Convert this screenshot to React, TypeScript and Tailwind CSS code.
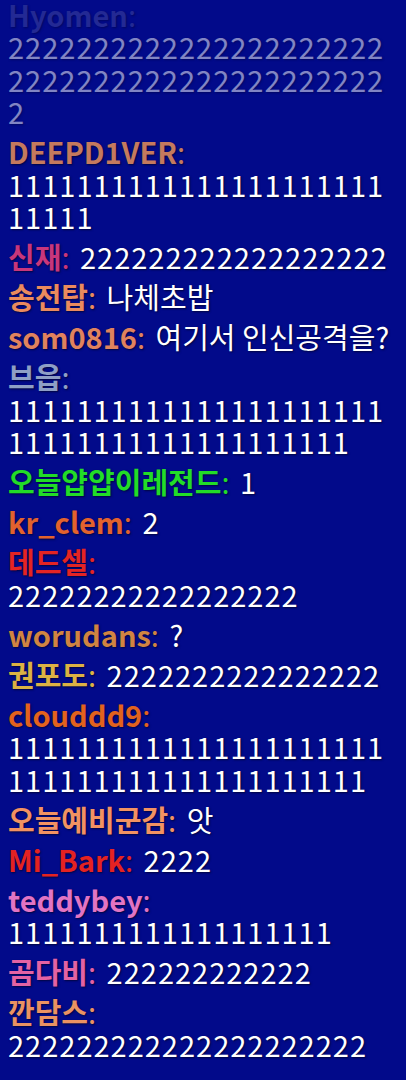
import React from 'react';

type ChatMessage = {
  name: string;
  color: string;
  text: string;
  faded?: boolean;
};

const messages: ChatMessage[] = [
  { name: 'Hyomen', color: 'text-[#44489e]', text: '2'.repeat(45), faded: true },
  { name: 'DEEPD1VER', color: 'text-[#c47a5e]', text: '1'.repeat(27) },
  { name: '신재', color: 'text-[#c8367c]', text: '2'.repeat(18) },
  { name: '송전탑', color: 'text-[#ea8a5e]', text: '나체초밥' },
  { name: 'som0816', color: 'text-[#e0825e]', text: '여기서 인신공격을?' },
  { name: '브읍', color: 'text-[#8e9fc6]', text: '1'.repeat(42) },
  { name: '오늘얍얍이레전드', color: 'text-[#22dc28]', text: '1' },
  { name: 'kr_clem', color: 'text-[#e2622e]', text: '2' },
  { name: '데드셀', color: 'text-[#e42424]', text: '2'.repeat(17) },
  { name: 'worudans', color: 'text-[#d08442]', text: '?' },
  { name: '권포도', color: 'text-[#dcb244]', text: '2'.repeat(16) },
  { name: 'clouddd9', color: 'text-[#e2621e]', text: '1'.repeat(43) },
  { name: '오늘예비군감', color: 'text-[#f29262]', text: '앗' },
  { name: 'Mi_Bark', color: 'text-[#e42222]', text: '2222' },
  { name: 'teddybey', color: 'text-[#e274c4]', text: '1'.repeat(19) },
  { name: '곰다비', color: 'text-[#e462a4]', text: '2'.repeat(12) },
  { name: '깐담스', color: 'text-[#ea9262]', text: '2'.repeat(21) },
];

const ChatLine: React.FC<{ msg: ChatMessage }> = ({ msg }) => {
  // digit spam gets a bit of tracking, the source font has wider numerals
  const digits = /^[0-9]+$/.test(msg.text);
  return (
    <div className={`[overflow-wrap:anywhere] ${msg.faded ? 'opacity-50' : ''}`}>
      <span className={`font-semibold ${msg.color}`}>
        {msg.name}
        <span className="font-normal mr-[4px]">:</span>
      </span>{' '}
      <span className={`text-white ${digits ? 'tracking-[1px]' : ''}`}>{msg.text}</span>
    </div>
  );
};

export default function App() {
  return (
    <div
      className="h-[1080px] w-full overflow-hidden bg-[#020a8a] flex flex-col justify-end pl-[8px] pr-[10px] pb-[20px] text-[29px] leading-[32.5px] [text-shadow:1px_1px_2px_rgba(0,0,0,0.55)]"
      style={{ fontFamily: '"Noto Sans CJK KR", "Noto Sans", sans-serif' }}
    >
      <div className="flex flex-col gap-[7.5px]">
        {messages.map((m, i) => (
          <ChatLine key={i} msg={m} />
        ))}
      </div>
    </div>
  );
}
